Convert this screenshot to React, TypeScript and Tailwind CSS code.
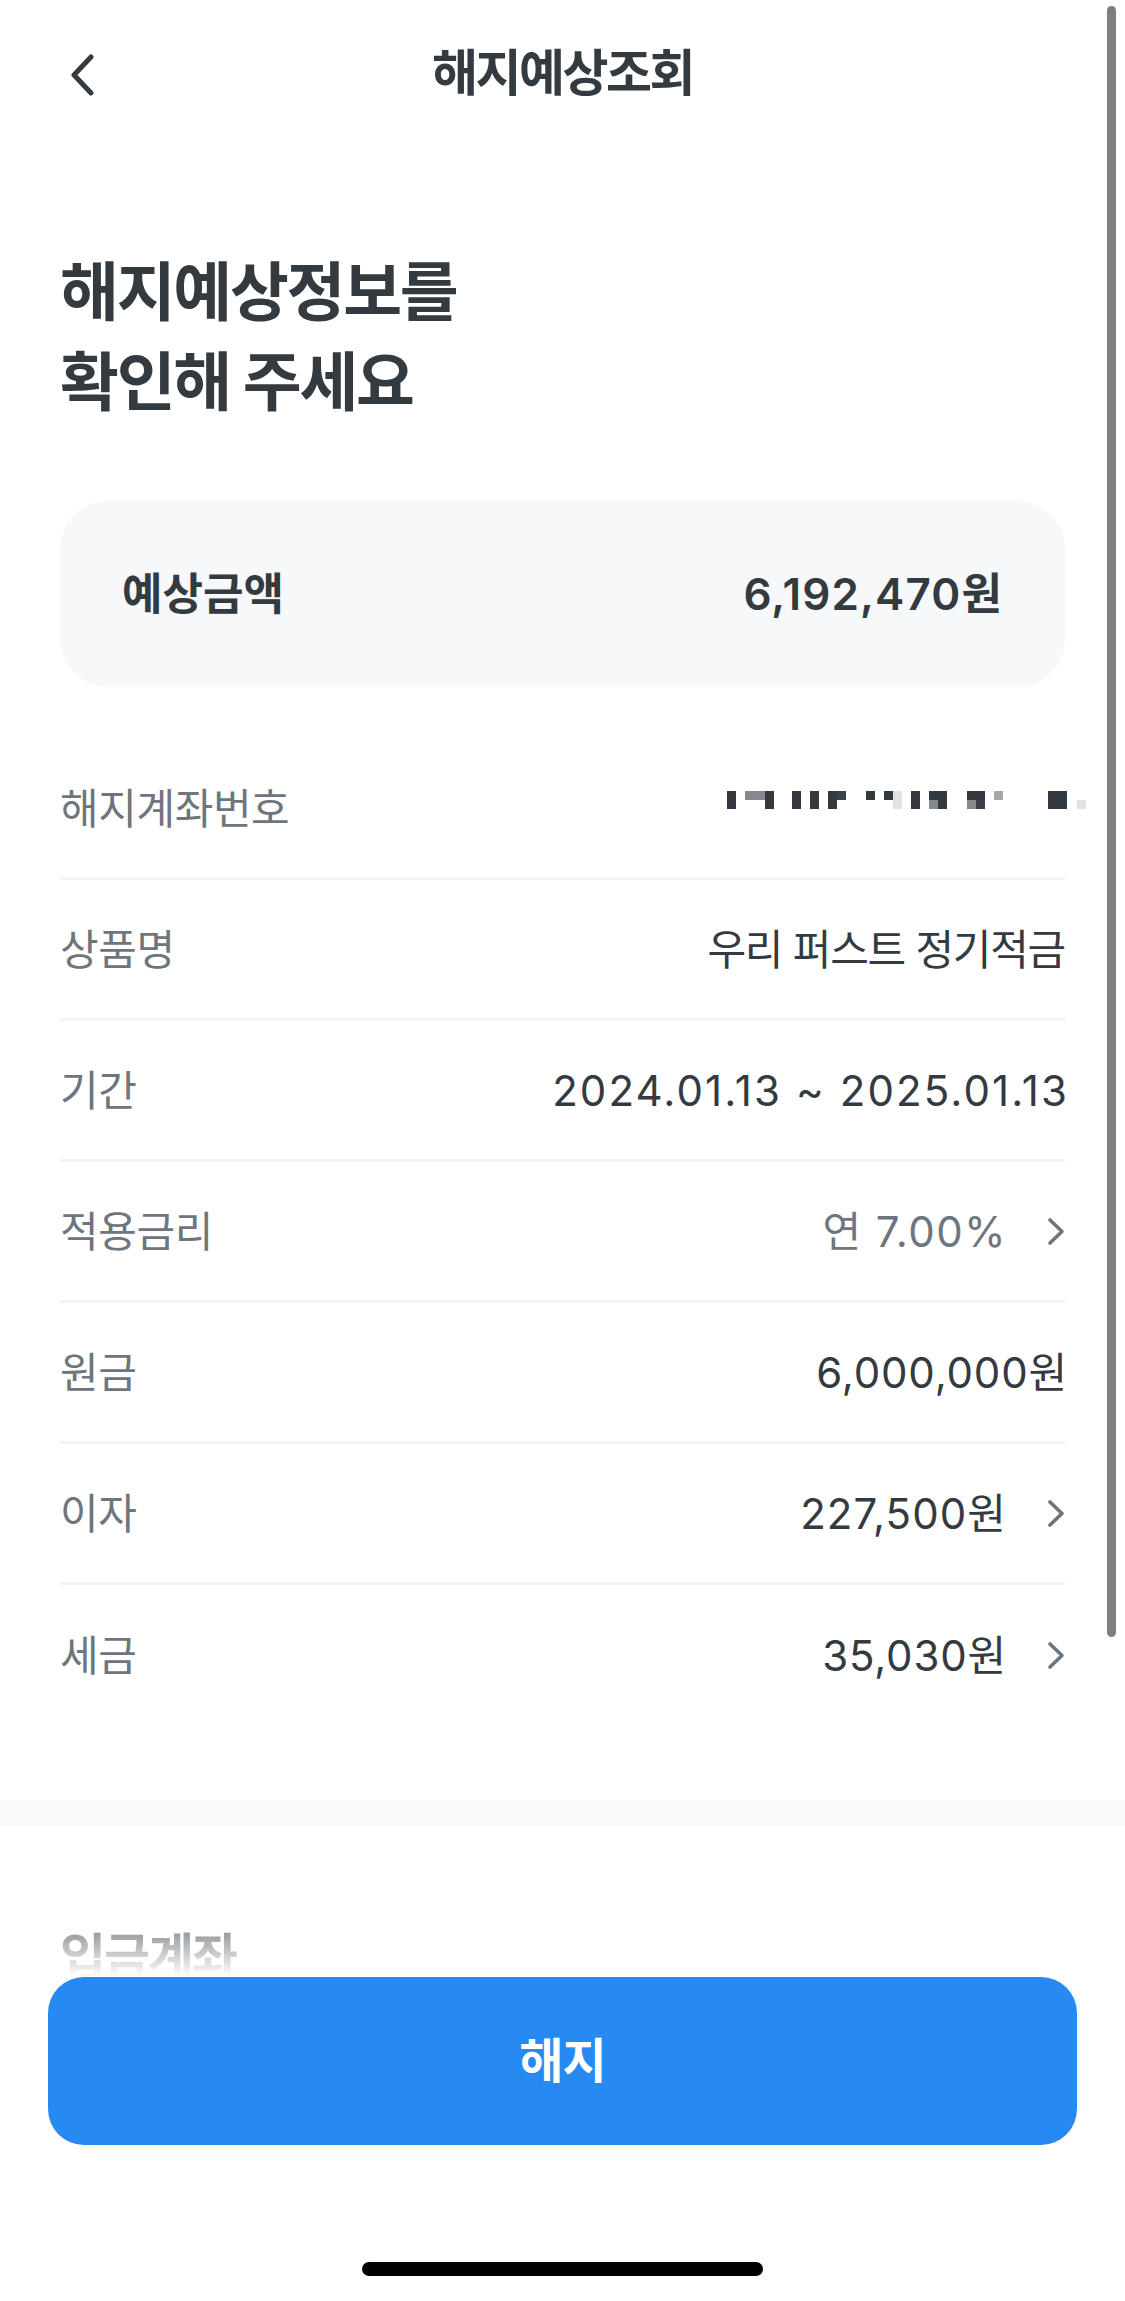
import React from 'react';

// One row of the termination detail list
type DetailRow = {
  label: string;
  value?: string;
  muted?: boolean;
  arrow?: boolean;
  masked?: boolean;
  tracking?: string;
};

const rows: DetailRow[] = [
  { label: '해지계좌번호', masked: true },
  { label: '상품명', value: '우리 퍼스트 정기적금', tracking: 'tracking-[-0.03em]' },
  { label: '기간', value: '2024.01.13 ~ 2025.01.13', tracking: 'tracking-[0.05em] -mr-[4px]' },
  { label: '적용금리', value: '연 7.00%', muted: true, arrow: true, tracking: 'tracking-[0.035em]' },
  { label: '원금', value: '6,000,000원', tracking: 'tracking-[0.02em] -mr-[3px]' },
  { label: '이자', value: '227,500원', arrow: true, tracking: 'tracking-[0.025em]' },
  { label: '세금', value: '35,030원', arrow: true, tracking: 'tracking-[0.02em]' },
];

const FONT = "font-['Inter','Noto_Sans_CJK_KR',sans-serif]";

const ChevronRight = () => (
  <svg width="18" height="29" viewBox="0 0 18 29" fill="none" className="shrink-0">
    <path d="M3 3L15 14.5L3 26" stroke="#6e757c" strokeWidth="3.6" strokeLinecap="round" strokeLinejoin="round" />
  </svg>
);

const ChevronLeft = () => (
  <svg width="26" height="42" viewBox="0 0 26 42" fill="none">
    <path d="M22 3L5 21L22 39" stroke="#333a40" strokeWidth="5" strokeLinecap="round" strokeLinejoin="round" />
  </svg>
);

// pixelated account number, as it appears blurred out in the screenshot
const MaskedNumber = () => {
  const dark = '#333a40';
  const dark2 = '#3b4147';
  const gray = '#85888c';
  const light = '#e0e1e2';
  const cells: [number, number, number, number, string][] = [
    [0, 9, 0, 18, dark],
    [18, 20, 0, 9, gray],
    [38, 9, 0, 18, dark],
    [65, 9, 0, 18, dark],
    [83, 9, 0, 18, dark],
    [101, 9, 0, 18, dark],
    [110, 9, 0, 9, dark2],
    [139, 9, 0, 9, dark],
    [157, 9, 0, 9, dark],
    [166, 9, 0, 18, light],
    [184, 9, 0, 18, dark],
    [202, 18, 0, 9, dark],
    [202, 9, 9, 9, gray],
    [211, 9, 9, 9, dark],
    [240, 18, 0, 9, dark],
    [240, 9, 9, 9, gray],
    [249, 9, 9, 9, dark2],
    [267, 9, 0, 9, '#a4a7aa'],
    [321, 19, 0, 18, dark],
    [350, 9, 9, 9, light],
  ];
  return (
    <svg width="359" height="18" viewBox="0 0 359 18" className="-mr-[21px] mb-[16px] shrink-0">
      {cells.map(([x, w, y, h, c], i) => (
        <rect key={i} x={x} y={y} width={w} height={h} fill={c} />
      ))}
    </svg>
  );
};

const App = () => {
  return (
    <div className={`relative w-full h-[2301px] overflow-hidden bg-white text-[#333a40] ${FONT}`}>
      {/* Header */}
      <header className="grid grid-cols-[1fr_auto_1fr] items-center h-[145px]">
        <div className="pl-[69px] pt-[4px] flex items-center">
          <ChevronLeft />
        </div>
        <h1 className="text-[50px] font-semibold tracking-[-0.05em] leading-none">해지예상조회</h1>
        <div />
      </header>

      <main className="px-[60px]">
        <h2 className="mt-[102px] text-[64px] font-bold leading-[90px] tracking-[-0.035em]">
          해지예상정보를
          <br />
          확인해 주세요
        </h2>

        {/* Expected amount card */}
        <div className="mt-[74px] h-[186px] rounded-[48px] bg-[#f7f8fa] px-[62px] flex items-center justify-between">
          <span className="text-[44px] font-semibold tracking-[0em]">예상금액</span>
          <span className="text-[44px] font-semibold tracking-[0.025em]">6,192,470원</span>
        </div>

        {/* Detail rows */}
        <div className="mt-[52px]">
          {rows.map((row, i) => (
            <div
              key={row.label}
              className={`h-[141px] flex items-center justify-between ${
                i < rows.length - 1 ? 'border-b-[3px] border-[#f2f3f5]' : ''
              }`}
            >
              <span className="text-[42px] text-[#6e757c] tracking-[-0.01em]">{row.label}</span>
              {row.masked ? (
                <MaskedNumber />
              ) : (
                <div className="flex items-center gap-[40px]">
                  <span
                    className={`text-[42px] ${row.tracking ?? ''} ${row.muted ? 'text-[#6e757c]' : 'text-[#333a40]'}`}
                  >
                    {row.value}
                  </span>
                  {row.arrow && <ChevronRight />}
                </div>
              )}
            </div>
          ))}
        </div>
      </main>

      <div className="mt-[75px] h-[25px] bg-[#f8f9fa]" />

      <section className="px-[60px] pt-[101px]">
        <h3 className="text-[50px] font-semibold leading-[60px] tracking-[-0.04em]">입금계좌</h3>
        <div className="mt-[60px] h-[300px]" />
      </section>

      {/* Scroll indicator */}
      <div className="absolute top-[6px] right-[9px] w-[9px] h-[1631px] rounded-full bg-[#7f7f7f]" />

      {/* Bottom CTA */}
      <div className="absolute inset-x-0 bottom-0">
        <div className="h-[88px] bg-linear-to-b from-white/0 to-white" />
        <div className="bg-white px-[48px] pb-[25px]">
          <button
            type="button"
            className="w-full h-[168px] rounded-[36px] bg-[#2789f2] text-white text-[48px] font-semibold tracking-[-0.02em]"
          >
            해지
          </button>
          <div className="mt-[117px] mx-auto w-[401px] h-[14px] rounded-full bg-black" />
        </div>
      </div>
    </div>
  );
};

export default App;
